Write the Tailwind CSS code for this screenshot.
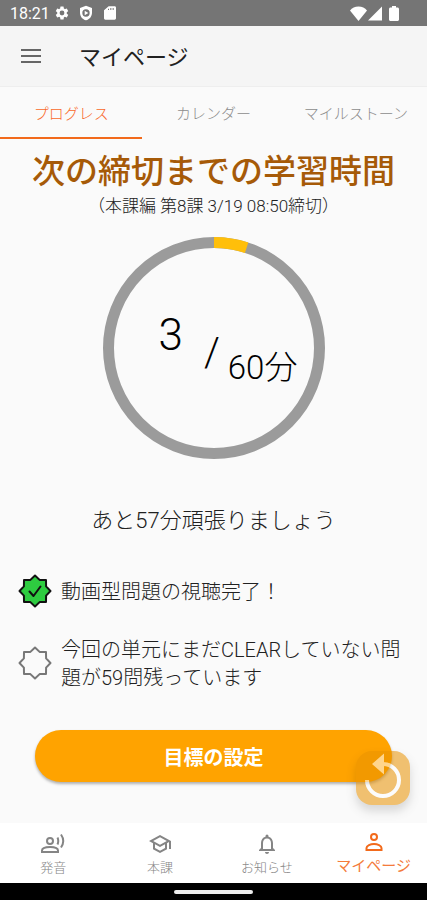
<!DOCTYPE html>
<html lang="ja">
<head>
<meta charset="utf-8">
<meta name="viewport" content="width=device-width, initial-scale=1">
<title>マイページ</title>
<script src="https://cdn.jsdelivr.net/npm/@tailwindcss/browser@4"></script>
</head>
<body class="flex min-h-screen flex-col bg-[#fafafa] font-[Roboto,'Noto_Sans_CJK_JP',sans-serif] text-[#212121]">

<div class="flex h-[26px] items-center bg-[#757575] pr-7 pl-[10px] text-white">
  <span class="pt-[2px] text-base">18:21</span>
  <svg class="ml-1 size-[16px]" viewBox="0 0 24 24" fill="currentColor" aria-hidden="true"><path d="M19.14 12.94c.04-.3.06-.61.06-.94s-.02-.64-.07-.94l2.03-1.58a.49.49 0 0 0 .12-.61l-1.92-3.32a.49.49 0 0 0-.59-.22l-2.39.96a7 7 0 0 0-1.62-.94l-.36-2.54a.48.48 0 0 0-.48-.41h-3.84a.47.47 0 0 0-.47.41l-.36 2.54c-.59.24-1.13.57-1.62.94l-2.39-.96a.48.48 0 0 0-.59.22L2.74 8.87a.47.47 0 0 0 .12.61l2.03 1.58c-.05.3-.09.63-.09.94s.02.64.07.94l-2.03 1.58a.49.49 0 0 0-.12.61l1.92 3.32c.12.22.37.29.59.22l2.39-.96c.5.38 1.03.7 1.62.94l.36 2.54c.05.24.24.41.48.41h3.84c.24 0 .44-.17.47-.41l.36-2.54a7 7 0 0 0 1.62-.94l2.39.96c.22.08.47 0 .59-.22l1.92-3.32a.47.47 0 0 0-.12-.61zM12 15.600a3.600 3.600 0 1 1 0-7.200 3.600 3.600 0 0 1 0 7.200z"/></svg>
  <svg class="ml-2 size-[16px]" viewBox="0 0 24 24" fill="currentColor" fill-rule="evenodd" aria-hidden="true"><path d="M12 1 3 4.500v7c0 5.500 3.800 10.200 9 11.500 5.200-1.300 9-6 9-11.500v-7zM12 6.500a5.500 5.500 0 1 1 0 11 5.500 5.500 0 0 1 0-11z"/><path d="M10 8.500v7l5.500-3.500z"/></svg>
  <svg class="ml-2 size-[16px]" viewBox="0 0 24 24" fill="currentColor" fill-rule="evenodd" aria-hidden="true"><path d="M19 2h-9L3 8v12c0 1.100.9 2 2 2h14c1.100 0 2-.9 2-2V4c0-1.100-.9-2-2-2zM10.500 7.500H9V5.500h1.500zm3.500 0h-1.500v-3H14zm3.500 0H16v-3h1.500z"/></svg>
  <svg class="ml-auto h-[15px] w-[17px]" viewBox="0 0 17 15" fill="currentColor" aria-hidden="true"><path d="M8.500 15 0 4.500C2 2 5 .5 8.500.5S15 2 17 4.500z"/></svg>
  <svg class="ml-px h-[15px] w-[14px]" viewBox="0 0 14 15" fill="currentColor" aria-hidden="true"><path d="M0 14.500h14V.5z"/></svg>
  <svg class="ml-[7px] h-[15px] w-[10px]" viewBox="0 0 10 15" fill="currentColor" aria-hidden="true"><path d="M3 0h4v1.500h1.500c.8 0 1.500.7 1.500 1.500v10.500c0 .8-.7 1.500-1.500 1.500h-7C.7 15 0 14.300 0 13.500V3c0-.8.7-1.500 1.500-1.500H3z"/></svg>
</div>

<header class="flex h-[61px] items-center border-b border-[#eeeeee] bg-[#f5f5f5] pl-[19px]">
  <button type="button" aria-label="メニュー" class="grid size-6 place-items-center text-[#666666]">
    <svg class="h-4 w-5" viewBox="0 0 20 16" stroke="currentColor" stroke-width="2" aria-hidden="true"><path d="M0 2h20M0 8h20M0 14h20"/></svg>
  </button>
  <h1 class="ml-9 pt-[3px] text-[22px]">マイページ</h1>
</header>

<nav class="grid h-[52px] grid-cols-3 text-[15px] font-light text-[#8c8c8c]" aria-label="タブ">
  <a href="#progress" aria-current="page" class="flex items-center justify-center border-b-2 border-[#f26a1b] pt-1 text-[#f9692a]">プログレス</a>
  <a href="#calendar" class="flex items-center justify-center pt-[2px]">カレンダー</a>
  <a href="#milestone" class="flex items-center justify-center pt-[2px]">マイルストーン</a>
</nav>

<main class="relative flex flex-1 flex-col items-center pt-[10px]">
  <h2 class="text-[33px] leading-[46px] font-medium text-[#a65a08]">次の締切までの学習時間</h2>
  <p class="text-[17px] leading-[22px] font-light">（本課編 第8課 3/19 08:50締切）</p>

  <div class="mt-5 grid size-[222px] place-items-center text-black">
    <svg class="col-start-1 row-start-1 size-full" viewBox="0 0 222 222" fill="none" stroke-width="11" role="img" aria-label="60分中3分">
      <circle cx="111" cy="111" r="105.500" stroke="#9b9b9b"/>
      <path d="M111 5.500A105.500 105.500 0 0 1 143.600 10.700" stroke="#ffbf0a"/>
    </svg>
    <div class="col-start-1 row-start-1 flex w-full items-start pl-14 leading-none font-light">
      <span class="text-[44px]">3</span>
      <span class="mt-5 ml-[21px] text-[40px]">/</span>
      <span class="mt-[38px] ml-2 text-[33px]">60分</span>
    </div>
  </div>

  <p class="mt-[46px] text-[22px] leading-8 font-light">あと57分頑張りましょう</p>

  <ul class="mt-[37px] flex w-full flex-col gap-[26px] pr-6 pl-[18px] text-[20px] leading-7 font-light">
    <li class="flex items-center gap-[9px]">
      <svg class="size-[34px] shrink-0" viewBox="0 0 34 34" fill="none" stroke="#111111" stroke-width="2" stroke-linejoin="round" stroke-linecap="round" role="img" aria-label="完了"><path fill="#2ecc40" d="M17 1.500 21.600 5.900 28 6 28.100 12.400 32.500 17 28.100 21.600 28 28 21.600 28.100 17 32.500 12.400 28.100 6 28 5.900 21.600 1.500 17 5.900 12.400 6 6 12.400 5.900z"/><path d="m11.500 17.500 4 4.500 7-9.500"/></svg>
      <span class="pt-[2px]">動画型問題の視聴完了！</span>
    </li>
    <li class="flex items-center gap-[9px]">
      <svg class="size-[34px] shrink-0" viewBox="0 0 34 34" fill="none" stroke="#777777" stroke-width="2" stroke-linejoin="round" role="img" aria-label="未完了"><path d="M17 1.500 21.600 5.900 28 6 28.100 12.400 32.500 17 28.100 21.600 28 28 21.600 28.100 17 32.500 12.400 28.100 6 28 5.900 21.600 1.500 17 5.900 12.400 6 6 12.400 5.900z"/></svg>
      <span class="pt-[2px]">今回の単元にまだCLEARしていない問題が59問残っています</span>
    </li>
  </ul>

  <div class="mt-[38px] w-full px-[35px] pb-10">
    <button type="button" class="h-[52px] w-full rounded-full bg-[#ffa300] pt-1 text-[20px] font-bold text-white shadow-[0_2px_3px_rgba(0,0,0,0.3)]">目標の設定</button>
  </div>

  <button type="button" aria-label="戻る" class="absolute right-[17px] bottom-[18px] size-[54px] rounded-[16px] bg-[#e89100] text-white opacity-55 shadow-[0_6px_10px_rgba(0,0,0,0.25)]">
    <svg class="size-full" viewBox="0 0 54 54" fill="none" aria-hidden="true"><path d="M11 29a16 16 0 1 0 16-16" stroke="currentColor" stroke-width="4"/><path d="M28 2.500v21L16 13z" fill="currentColor"/></svg>
  </button>
</main>

<nav class="grid h-[60px] grid-cols-4 bg-white text-[13px] font-light text-[#858585]" aria-label="メイン">
  <a href="#pronunciation" class="flex flex-col items-center gap-[2px] pt-[9px] leading-5">
    <svg class="size-6" viewBox="0 0 24 24" fill="none" stroke="#858585" stroke-width="2" aria-hidden="true"><circle cx="9" cy="9" r="3"/><path d="M1 20v-1.500C1 16 5.500 15 9 15s8 1 8 3.500V20zM16.500 5.500q1.500 3.500 0 7M20 2.500q4.500 6.500 0 13"/></svg>
    <span>発音</span>
  </a>
  <a href="#lesson" class="flex flex-col items-center gap-[2px] pt-[9px] leading-5">
    <svg class="size-6" viewBox="0 0 24 24" fill="#858585" aria-hidden="true"><path d="M12 3 1 9l4 2.180v6L12 21l7-3.820v-6l2-1.090V17h2V9zm6.820 6L12 12.720 5.180 9 12 5.280zM17 15.990l-5 2.730-5-2.730v-3.720L12 15l5-2.730z"/></svg>
    <span>本課</span>
  </a>
  <a href="#news" class="flex flex-col items-center gap-[2px] pt-[9px] leading-5">
    <svg class="size-6" viewBox="0 0 24 24" fill="#858585" aria-hidden="true"><path d="M12 22c1.100 0 2-.9 2-2h-4c0 1.100.9 2 2 2zm6-6v-5c0-3.070-1.630-5.640-4.500-6.320V4a1.500 1.500 0 0 0-3 0v.68C7.640 5.360 6 7.920 6 11v5l-2 2v1h16v-1zm-2 1H8v-6c0-2.480 1.510-4.500 4-4.500s4 2.020 4 4.500z"/></svg>
    <span>お知らせ</span>
  </a>
  <a href="#mypage" aria-current="page" class="flex flex-col items-center gap-[2px] pt-[7px] text-[15px] leading-5 font-normal text-[#f47b3b]">
    <svg class="size-6" viewBox="0 0 24 24" fill="none" stroke="#f26a1b" stroke-width="2" aria-hidden="true"><circle cx="12" cy="7" r="3"/><path d="M4.500 20v-2c0-2.500 4-4 7.500-4s7.500 1.500 7.500 4v2z"/></svg>
    <span>マイページ</span>
  </a>
</nav>

<div class="flex h-[17px] items-center justify-center bg-black pt-px">
  <div class="h-1 w-[79px] rounded-full bg-[#eeeeee]"></div>
</div>
</body>
</html>
